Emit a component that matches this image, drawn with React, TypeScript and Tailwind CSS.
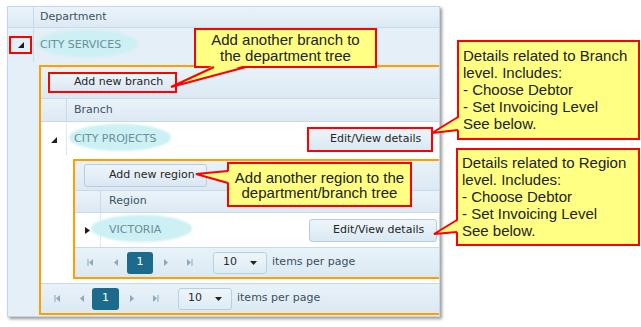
import React from "react";

const gridFont = { fontFamily: '"DejaVu Sans", Verdana, sans-serif' };
const noteFont = { fontFamily: '"Liberation Sans", Arial, sans-serif' };

const CollapseIcon = () => (
  <svg width="6" height="6" viewBox="0 0 6 6">
    <polygon points="6,0 6,6 0,6" fill="#1d1d1d" />
  </svg>
);

const ExpandIcon = () => (
  <svg width="5" height="7" viewBox="0 0 5 7">
    <polygon points="0,0 5,3.5 0,7" fill="#1d1d1d" />
  </svg>
);

const PagerIcon = ({ kind }: { kind: "first" | "prev" | "next" | "last" }) => (
  <svg width="7" height="7" viewBox="0 0 7 7">
    {kind === "first" && (
      <>
        <rect x="0.5" y="0" width="1" height="7" fill="#8ea9bd" />
        <polygon points="6,0 6,7 2,3.5" fill="#8ea9bd" />
      </>
    )}
    {kind === "prev" && <polygon points="5,0 5,7 1,3.5" fill="#8ea9bd" />}
    {kind === "next" && <polygon points="2,0 6,3.5 2,7" fill="#8ea9bd" />}
    {kind === "last" && (
      <>
        <polygon points="1,0 5,3.5 1,7" fill="#8ea9bd" />
        <rect x="5.5" y="0" width="1" height="7" fill="#8ea9bd" />
      </>
    )}
  </svg>
);

const Ellipse = ({ label, left, width }: { label: string; left: number; width: number }) => (
  <span className="relative inline-block text-[#6d8e9d]">
    <span
      className="absolute top-[-7px] h-[27px] rounded-[50%] bg-[#ccf0f3] blur-[1px]"
      style={{ left: -left, width }}
    />
    <span className="relative">{label}</span>
  </span>
);

const Pager = ({ pad, gaps }: { pad: string; gaps: string[] }) => (
  <div className={`flex h-[30px] items-center border-t border-[#c6dae9] bg-linear-to-b from-[#e9f2f9] to-[#dbe9f3] ${pad}`}>
    <span className="flex w-[12px] justify-center"><PagerIcon kind="first" /></span>
    <span className={`flex w-[12px] justify-center ${gaps[0]}`}><PagerIcon kind="prev" /></span>
    <span className={`flex h-[22px] items-center justify-center rounded-[3px] bg-[#1c6b8d] text-white ${gaps[1]}`}>1</span>
    <span className={`flex w-[12px] justify-center ${gaps[2]}`}><PagerIcon kind="next" /></span>
    <span className={`flex w-[12px] justify-center ${gaps[3]}`}><PagerIcon kind="last" /></span>
    <span className={`flex h-[22px] w-[54px] items-center justify-between rounded-[3px] border border-[#b9d0e2] bg-linear-to-b from-[#eef5fa] to-[#deebf5] pl-[9px] pr-[9px] text-[#2b2b2b] ${gaps[4]}`}>
      10
      <svg width="7" height="4" viewBox="0 0 7 4">
        <polygon points="0,0 7,0 3.5,4" fill="#222" />
      </svg>
    </span>
    <span className="ml-[5px] text-[#3b4f5e]">items per page</span>
  </div>
);

export default function App() {
  return (
    <div className="relative h-[327px] w-[641px] overflow-hidden bg-white pl-[7px] pt-[6px] text-[11px]" style={gridFont}>
      <div className="flex h-[311px] w-[433px] flex-col border border-[#c2d7e8] bg-[#e5eff7] shadow-[2px_2px_3px_rgba(0,0,0,0.4)]">
        <div className="flex h-[21px] border-b border-[#c6dae9] bg-linear-to-b from-[#eaf3f9] to-[#dde9f3]">
          <div className="w-[26px] border-r border-[#c6dae9]" />
          <div className="flex items-center pl-[6px] text-[#3b5366]">Department</div>
        </div>
        <div className="flex h-[34px]">
          <div className="flex w-[26px] items-center justify-center border-r border-[#c6dae9]">
            <span className="flex h-[18px] w-[23px] items-center justify-center border-2 border-[#ff0000]">
              <CollapseIcon />
            </span>
          </div>
          <div className="flex items-center pl-[6px]">
            <Ellipse label="CITY SERVICES" left={3} width={101} />
          </div>
        </div>
        <div className="flex pb-[1px] pt-[3px]">
          <div className="w-[31px] shrink-0" />
          <div className="flex h-[250px] flex-1 flex-col border-y-2 border-l-2 border-[#ffa000] bg-white">
            <div className="flex h-[32px] items-center border-b border-[#c6dae9] bg-linear-to-b from-[#e9f2f9] to-[#dce9f3] pl-[7px]">
              <span className="flex h-[21px] w-[129px] items-center border-2 border-[#ff0000] bg-linear-to-b from-[#eef5fa] to-[#dae8f3] pl-[24px] text-[#262626]">
                Add new branch
              </span>
            </div>
            <div className="flex h-[23px] border-b border-[#c6dae9] bg-linear-to-b from-[#eaf3f9] to-[#dde9f3]">
              <div className="w-[26px] border-r border-[#c6dae9]" />
              <div className="flex items-center pl-[7px] text-[#3b5366]">Branch</div>
            </div>
            <div className="flex h-[35px] items-center">
              <div className="flex h-[31px] w-[26px] items-center justify-center border-r border-[#dbe8f1]">
                <CollapseIcon />
              </div>
              <div className="flex items-center pl-[7px]">
                <Ellipse label="CITY PROJECTS" left={5} width={102} />
              </div>
              <span className="ml-auto mr-[6px] flex h-[25px] w-[126px] items-center border-2 border-[#ff0000] bg-linear-to-b from-[#eef5fa] to-[#dae8f3] pl-[21px] text-[#262626]">
                Edit/View details
              </span>
            </div>
            <div className="flex pb-[4px] pt-[2px]">
              <div className="w-[32px] shrink-0" />
              <div className="flex h-[120px] flex-1 flex-col border-y-2 border-l-2 border-[#ffa000] bg-white">
                <div className="flex h-[30px] items-center border-b border-[#c6dae9] bg-linear-to-b from-[#e9f2f9] to-[#dce9f3] pl-[9px]">
                  <span className="flex h-[23px] w-[123px] items-center rounded-[3px] border border-[#b4cde0] bg-linear-to-b from-[#eef5fa] to-[#dae8f3] pl-[24px] text-[#262626]">
                    Add new region
                  </span>
                </div>
                <div className="flex h-[22px] border-b border-[#c6dae9] bg-linear-to-b from-[#eaf3f9] to-[#dde9f3]">
                  <div className="w-[26px] border-r border-[#c6dae9]" />
                  <div className="flex items-center pl-[8px] text-[#3b5366]">Region</div>
                </div>
                <div className="flex h-[34px] items-center">
                  <div className="flex h-[34px] w-[26px] items-center justify-center border-r border-[#dbe8f1]">
                    <ExpandIcon />
                  </div>
                  <div className="flex items-center pl-[8px]">
                    <Ellipse label="VICTORIA" left={18} width={101} />
                  </div>
                  <span className="ml-auto mr-[2px] flex h-[23px] w-[128px] items-center rounded-[3px] border border-[#b4cde0] bg-linear-to-b from-[#eef5fa] to-[#dae8f3] pl-[23px] text-[#262626]">
                    Edit/View details
                  </span>
                </div>
                <Pager pad="pl-[9px]" gaps={["ml-[14px]", "ml-[5px] w-[26px]", "ml-[6px]", "ml-[12px]", "ml-[18px]"]} />
              </div>
            </div>
            <Pager pad="pl-[10px]" gaps={["ml-[13px]", "ml-[4px] w-[27px]", "ml-[6px]", "ml-[12px]", "ml-[17px]"]} />
          </div>
        </div>
      </div>

      <div className="absolute left-[194px] top-[28px] flex h-[40px] w-[183px] flex-col items-center justify-center border-2 border-[#ff0000] bg-[#ffff84] text-center text-[15px] leading-[16px] text-[#222]" style={noteFont}>
        <span>Add another branch to</span>
        <span>the department tree</span>
      </div>
      <div className="absolute left-[227px] top-[162px] flex h-[45px] w-[185px] flex-col items-center justify-center border-2 border-[#ff0000] bg-[#ffff84] text-center text-[15px] leading-[15px] text-[#222]" style={noteFont}>
        <span>Add another region to the</span>
        <span>department/branch tree</span>
      </div>
      <div className="absolute left-[457px] top-[40px] h-[100px] w-[183px] border-2 border-[#ff0000] bg-[#ffff84] pl-[4px] pt-[5px] text-[15px] leading-[17px] text-[#222]" style={noteFont}>
        <div>Details related to Branch</div>
        <div>level. Includes:</div>
        <div>- Choose Debtor</div>
        <div>- Set Invoicing Level</div>
        <div>See below.</div>
      </div>
      <div className="absolute left-[456px] top-[148px] h-[98px] w-[184px] border-2 border-[#ff0000] bg-[#ffff84] pl-[4px] pt-[4px] text-[15px] leading-[17px] text-[#222]" style={noteFont}>
        <div>Details related to Region</div>
        <div>level. Includes:</div>
        <div>- Choose Debtor</div>
        <div>- Set Invoicing Level</div>
        <div>See below.</div>
      </div>

      <svg className="pointer-events-none absolute left-0 top-0" width="641" height="327" viewBox="0 0 641 327">
        <polygon points="214,65 171,87 246,65" fill="#ffff84" />
        <polyline points="214,67 171,87 246,67" fill="none" stroke="#ff0000" strokeWidth="2" />
        <polygon points="460,117 432,133 460,130" fill="#ffff84" />
        <polyline points="458,117 432,133 458,130" fill="none" stroke="#ff0000" strokeWidth="2" />
        <polygon points="230,171 196,174 230,183" fill="#ffff84" />
        <polyline points="228,171 196,174 228,183" fill="none" stroke="#ff0000" strokeWidth="2" />
        <polygon points="459,220 434,234 459,232" fill="#ffff84" />
        <polyline points="457,220 434,234 457,232" fill="none" stroke="#ff0000" strokeWidth="2" />
      </svg>
    </div>
  );
}
